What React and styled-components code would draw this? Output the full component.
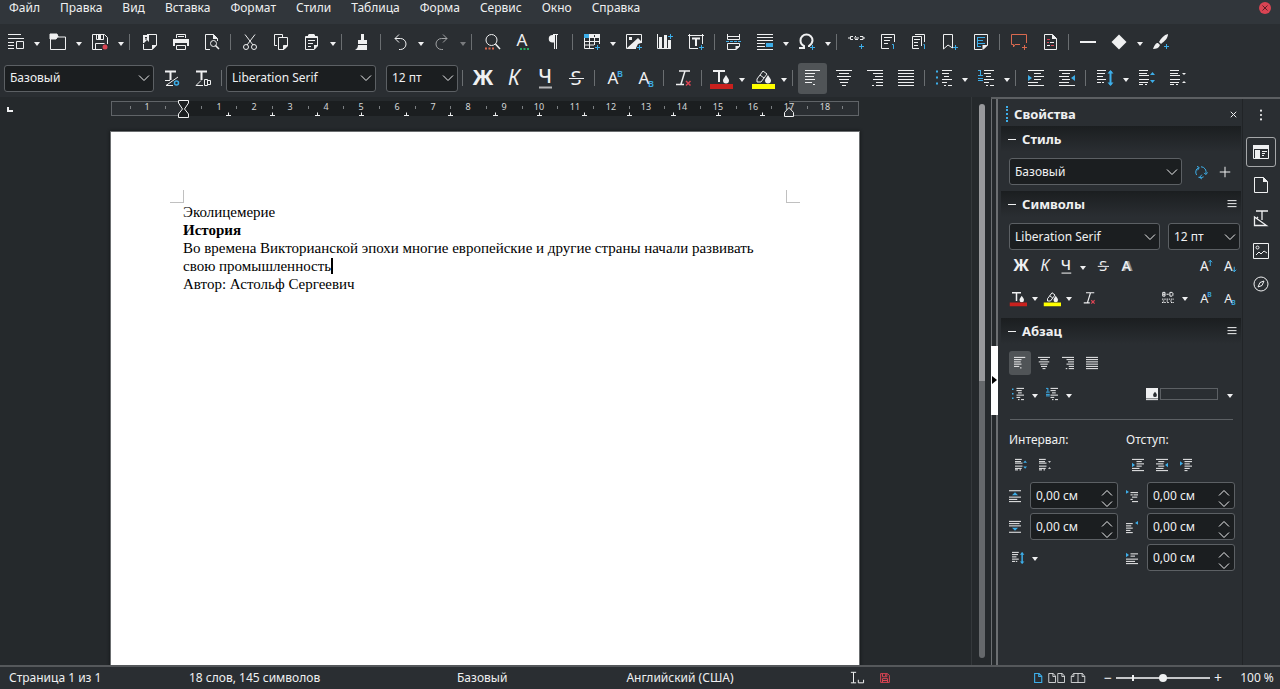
import styled, { createGlobalStyle, css } from 'styled-components';

const GlobalStyle = createGlobalStyle`
  :root {
    --window: #2a2e32;
    --header: #31363b;
    --view: #1b1e20;
    --canvas: #25292c;
    --line: #5c6064;
    --text: #eff0f1;
    --blue: #3daee9;
    --red: #da4453;
    --orange: #d9694f;
    --green: #27ae60;
  }

  * {
    box-sizing: border-box;
  }

  body {
    margin: 0;
    background: var(--window);
    color: var(--text);
    font: 12px/18px 'Noto Sans', sans-serif;
    overflow: hidden;
  }

  button,
  input,
  select {
    font: inherit;
    color: inherit;
  }

  button {
    border: 0;
    padding: 0;
    background: none;
  }
`;

/* ---------- icons ---------- */

const rows = (list) => list.map(([x, y, w]) => `M${x} ${y}h${w}`).join('');

const leftRows = rows([[0, 0.5, 15], [0, 3.5, 10], [0, 6.5, 9], [0, 9.5, 10], [0, 12.5, 7], [8, 14.5, 2]]);
const centerRows = rows([[0, 0.5, 16], [3, 3.5, 10], [1, 6.5, 14], [3, 9.5, 10], [4, 12.5, 8], [6, 15.5, 4]]);
const rightRows = rows([[0, 0.5, 16], [6, 3.5, 10], [8, 6.5, 8], [6, 9.5, 10], [9, 12.5, 7], [5, 15.5, 2], [9, 15.5, 7]]);
const fullRows = rows([[0, 0.5, 16], [0, 3.5, 16], [0, 6.5, 16], [0, 9.5, 16], [0, 12.5, 16], [0, 15.5, 16]]);
const listRows = rows([[6, 0.5, 10], [6, 3.5, 7], [8, 6.5, 5], [6, 9.5, 10], [6, 12.5, 5], [8, 15.5, 2], [12, 15.5, 4]]);
const paraRows = rows([[0, 0.5, 9], [0, 3.5, 8], [0, 5.5, 10], [0, 9.5, 10], [0, 12.5, 9], [0, 14.5, 4], [6, 14.5, 2]]);

const Plus = ({ x = 13.5, y = 13.5, color = 'var(--blue)' }) => (
  <path d={`M${x - 2.5} ${y}h5M${x} ${y - 2.5}v5`} stroke={color} />
);

const Glyph = ({ x = 8, y = 15, size = 20, weight = 400, color = 'currentColor', children, ...rest }) => (
  <text
    x={x}
    y={y}
    fontSize={size}
    fontWeight={weight}
    fill={color}
    stroke='none'
    textAnchor='middle'
    {...rest}
  >
    {children}
  </text>
);

const drop = 'M13 5c1.5 2.5 3 4 3 5.5a3 3 0 0 1-6 0C10 9 11.5 7.5 13 5z';

const icons = {
  template: (
    <>
      <path d={rows([[0, 0.5, 13], [0, 4.5, 16], [0, 8.5, 6], [0, 11.5, 6], [0, 14.5, 6]])} />
      <path d='M8.5 7.5h7v7h-7z' />
    </>
  ),
  open: (
    <>
      <path d='M.5.5h6L8 3h7.5v12.5H.5z' />
      <path d='M0 0h7l1 2.5L6 5H0z' fill='currentColor' />
    </>
  ),
  save: (
    <>
      <path d='M10 15.5H.5V.5h12l3 3V10M4.5.5v5h7v-5M3.5 15V9.500h9' />
      <path d='M6 1h3v4H6z' fill='currentColor' stroke='none' />
      <circle cx='13' cy='13' r='2.5' fill='var(--red)' stroke='none' />
    </>
  ),
  exportPdf: (
    <>
      <path d='M5 .5h9.5V11L10 15.5H1.5V10' />
      <path d='M1 1h6v7L5 6l-3 3H1zM10 11h5l-5 5z' fill='currentColor' stroke='none' />
      <path d='M3 3.5h2M4 3v3' stroke='var(--window)' />
    </>
  ),
  print: (
    <>
      <path d='M3.5 4V.5h9V4M3.5 11.5v4h9v-4z' />
      <path d='M0 5h16v7h-2V9H2v3H0z' fill='currentColor' stroke='none' />
      <path d='M5 2.5h6' />
    </>
  ),
  preview: (
    <>
      <path d='M6 15.5H1.5V.5h8l4 4V7' />
      <path d='M9 0v5h5z' fill='currentColor' stroke='none' />
      <circle cx='9.5' cy='9.5' r='3' />
      <path d='M11.5 11.5 15 15' strokeWidth='1.5' />
    </>
  ),
  cut: (
    <>
      <path d='m3 .5 8 10.5M13 .5 5 11' />
      <circle cx='4' cy='13' r='2.5' />
      <circle cx='12' cy='13' r='2.5' />
    </>
  ),
  copy: (
    <>
      <path d='M4 11.5H1.5V.5h8V3M5.5 3.5h9V12L11 15.5H5.5z' />
      <path d='M10.5 11.5h4l-4 4z' fill='currentColor' />
    </>
  ),
  paste: (
    <>
      <path d='M10 15.5H1.5v-13h12V12L10 15.5M4.5.5h6' />
      <path d='M4 1h7v3H4zM10 11h4l-4 5z' fill='currentColor' stroke='none' />
      <path d='M2 3.5h11M4 6.5h7M4 9.500h5M4 12.5h3' />
    </>
  ),
  brush: <path d='M7 0h3v6H7zM4 6h9v4H4zM4 11h9v5H1c2-1 3-3 3-5z' fill='currentColor' stroke='none' />,
  undo: <path d='M7 .5 3 4.5l4 4M3 4.5h5.5a5 5 0 0 1 0 11H7' />,
  redo: <path d='m9 .5 4 4-4 4M13 4.5H7.500a5 5 0 0 0 0 11H9' />,
  find: (
    <>
      <circle cx='7.5' cy='6' r='5.5' />
      <path d='m11.5 10 4.500 5' strokeWidth='1.5' />
      <path d='M1 14.5h10' stroke='var(--orange)' strokeWidth='2' strokeDasharray='2 1.5' />
    </>
  ),
  spell: (
    <>
      <Glyph x={7} y={12} size={17}>A</Glyph>
      <path d='M5 15h10' stroke='var(--green)' strokeWidth='2' strokeDasharray='2 1.5' />
    </>
  ),
  pilcrow: (
    <>
      <path d='M8 1H6.5a3.5 3.5 0 0 0 0 7.500H8z' fill='currentColor' stroke='none' />
      <path d='M7 .5h5M8.5 0v15M10.5 0v15' />
    </>
  ),
  table: (
    <>
      <path d='M0 0h5v4H0z' fill='var(--blue)' stroke='none' />
      <path d='M5 0h11v4H5z' fill='currentColor' stroke='none' />
      <path d='M10.5 1v2' stroke='var(--window)' />
      <path d='M15.5 4v6M.5 4v10.5H10M0 7.500h16M0 11h10M5.5 4v11M10.5 4v7' />
      <Plus />
    </>
  ),
  image: (
    <>
      <path d='M15.5 9V.5H.5v14H10' />
      <path d='M1 14 12 4l3 3v2l-3 1-2 4zM3 3h3v3H3z' fill='currentColor' stroke='none' />
      <Plus />
    </>
  ),
  chart: (
    <>
      <path d='M.5 0v14.5H14' />
      <path d='M2 3h3v11H2zM7 1h3v13H7zM11 6h3v8h-3z' fill='currentColor' stroke='none' />
      <Plus x={13.5} y={2.5} />
    </>
  ),
  textBox: (
    <>
      <path d='M1.5 0v14.5H10M14.5 0v10M0 1.5h16' />
      <path d='M4 4.5h8M8 4.5V12' strokeWidth='2' />
      <Plus />
    </>
  ),
  pageBreak: (
    <>
      <path d='M1.5 0v5.5h12V0M1.5 2.5h12M10 15.5H1.5v-6h12v3z' />
      <path d='M0 7.500h15' stroke='var(--blue)' strokeDasharray='3 1' />
      <path d='M9.500 12H14l-4.5 4z' fill='currentColor' stroke='none' />
    </>
  ),
  field: (
    <>
      <path d={rows([[0, 0.5, 16], [0, 3.5, 16], [0, 6.5, 16], [0, 9.5, 8], [0, 12.5, 8], [0, 15.5, 16]])} />
      <path d='M9 9h7v4H9z' fill='var(--blue)' stroke='none' />
    </>
  ),
  omega: (
    <>
      <path
        d='M0 14h5v-2C2 10.5 1.5 8.5 1.5 6.5a6 6 0 0 1 12 0c0 2-1 3.500-3.500 5.500v1'
        strokeWidth='2'
      />
      <Plus />
    </>
  ),
  link: (
    <>
      <path d='M4 2.5H1.5v3H4M5 4h5M7 2.5H6M11 2.5h3v3h-3M6 5.5h3M14 4h2M-1 4h2' />
      <Plus x={12.5} y={12.5} />
    </>
  ),
  footnote: (
    <>
      <path d='M9 14.5H1.5V.5h13V8M4 3.5h8M4 6.5h6M4 9.500h4' />
      <path d='M12 10.5h1.5V15' stroke='var(--blue)' />
    </>
  ),
  endnote: (
    <>
      <path d='M8 14.5H1.5v-12h9V12M4 .5h9.500V8M3 5.5h6M3 8.5h4M3 11.5h4' />
      <path d='M12.5 10.5h1V15' stroke='var(--blue)' />
    </>
  ),
  bookmark: (
    <>
      <path d='M1.5.5h9V14L6 11l-4.500 4z' />
      <Plus />
    </>
  ),
  crossRef: (
    <>
      <path d='M9 15.5H1.5V.5h13V11L10 15.5' />
      <path d='M5 3.5h7M5 6.5h5M5 9.500h7M5 12.5h3M4.5 3v10' stroke='var(--blue)' />
      <path d='M9.500 11H15l-5.500 5z' fill='currentColor' stroke='none' />
    </>
  ),
  comment: (
    <>
      <path d='M9 10.5H4L2.5 13v-2.500H.5V.5h15V9' stroke='var(--orange)' />
      <Plus color='var(--orange)' />
    </>
  ),
  changes: (
    <>
      <path d='M2.5.5h8l4 4v11h-12z' />
      <path d='M10 0v5h5z' fill='currentColor' stroke='none' />
      <path d='M5 5.5h3M5 8.5h2M9 11.5h3' stroke='var(--red)' />
      <path d='M8 8.5h4M5 11.5h3' />
    </>
  ),
  rule: <path d='M0 8h16' strokeWidth='2' />,
  diamond: <path d='m8 .5 7.500 7.500L8 15.5.5 8z' fill='currentColor' stroke='none' />,
  draw: (
    <>
      <path d='M15 0c-4 1-7 4-9 8l2 2c4-3 7-6 7-10zM5 9c-2 0-3 1-5 6 3 0 6-1 7-4z' fill='currentColor' stroke='none' />
      <Plus x={13.5} y={12.5} />
    </>
  ),
  updateStyle: (
    <>
      <path d='M1 1.5h11M6.5 1v9' strokeWidth='2' />
      <path d='M1 10.5h5M14 7 2 15.5h7' />
      <circle cx='12.5' cy='13' r='2' stroke='var(--blue)' strokeWidth='1.5' />
    </>
  ),
  newStyle: (
    <>
      <path d='M1 1.5h11M6.5 1v9' strokeWidth='2' />
      <path d='M6 10.5 1 15.5h7M9.500 9.500h3v6h-3zM12.5 10.5h3v4h-3' />
    </>
  ),
  bold: <Glyph size={21} weight={700}>Ж</Glyph>,
  italic: <Glyph size={21} weight={400} fontStyle='italic'>К</Glyph>,
  underline: (
    <>
      <Glyph y={13} size={20} weight={500}>Ч</Glyph>
      <path d='M2 17.5h13' strokeWidth='2' opacity='.7' />
    </>
  ),
  strike: (
    <>
      <Glyph y={15} size={20}>S</Glyph>
      <path d='M1 8.5h15' stroke='var(--window)' strokeWidth='3' />
      <path d='M1 8.5h15' />
    </>
  ),
  shadow: (
    <>
      <Glyph x={9} y={15} size={19} weight={700} color='#8a8e91'>A</Glyph>
      <Glyph x={7} y={14} size={19} weight={500}>A</Glyph>
    </>
  ),
  superscript: (
    <>
      <Glyph x={7} y={14} size={17}>A</Glyph>
      <Glyph x={14} y={7} size={9} weight={600} color='var(--blue)'>B</Glyph>
    </>
  ),
  subscript: (
    <>
      <Glyph x={7} y={14} size={17}>A</Glyph>
      <Glyph x={14} y={17} size={9} weight={600} color='var(--blue)'>B</Glyph>
    </>
  ),
  grow: (
    <>
      <Glyph x={7} y={14} size={18}>A</Glyph>
      <path d='M15 8V0M12.5 3 15 .5 17.5 3' stroke='var(--blue)' />
    </>
  ),
  shrink: (
    <>
      <Glyph x={7} y={14} size={18}>A</Glyph>
      <path d='M15 9v7M12.5 13l2.500 2.500 2.500-2.500' stroke='var(--blue)' />
    </>
  ),
  clear: (
    <>
      <path d='M4 1h11M10 1 6 14M1 14.5h8' strokeWidth='1.5' />
      <path d='m11 11 4.500 4.500m0-4.500L11 15.5' stroke='var(--red)' strokeWidth='1.5' />
    </>
  ),
  fontColor: (
    <>
      <path d='M0 1h12M6 1v11' strokeWidth='2' />
      <path d={drop} fill='currentColor' stroke='none' />
      <path d='M-3 16.5h23' stroke='#c9211e' strokeWidth='5' />
    </>
  ),
  highlight: (
    <>
      <path d='m2 9 6-8 4 3-6 8H2zM5 5l4 3' />
      <path d={drop} fill='currentColor' stroke='none' />
      <path d='M-3 16.5h23' stroke='#ffff00' strokeWidth='5' />
    </>
  ),
  spacing: (
    <>
      <path d='M1 .5h3v5H1zM1 3h3M10.5.5h3l1 1v3l-1 1h-3zM6 3h3' />
      <path d='M0 9.500h16M0 14h5m2 0h3m2 0h4M1 12h2m3 0h2m3 0h3' strokeDasharray='2 1' />
    </>
  ),
  alignLeft: <path d={leftRows} />,
  alignCenter: <path d={centerRows} />,
  alignRight: <path d={rightRows} />,
  alignFull: <path d={fullRows} />,
  bullets: (
    <>
      <path d={listRows} />
      <path d='M0 1.5h2M0 7.500h2M0 13.5h2' stroke='var(--blue)' strokeWidth='2' />
    </>
  ),
  numbering: (
    <>
      <path d={listRows} />
      <path d='M0 5.5h5M2.5 0v5M0 .5h2.5M0 8.5h5M0 10.5h5' stroke='var(--blue)' />
    </>
  ),
  indentMore: (
    <>
      <path d={rows([[0, 0.5, 16], [6, 3.5, 7], [6, 6.5, 10], [6, 9.5, 7], [0, 12.5, 10], [0, 15.5, 16]])} />
      <path d='M0 5v6l4-3z' fill='var(--blue)' stroke='none' />
    </>
  ),
  indentLess: (
    <>
      <path d={rows([[0, 0.5, 16], [3, 3.5, 8], [0, 6.5, 10], [3, 9.5, 8], [0, 12.5, 10], [0, 15.5, 16]])} />
      <path d='M16 5v6l-4-3z' fill='var(--blue)' stroke='none' />
    </>
  ),
  hanging: (
    <>
      <path d={rows([[4, 0.5, 12], [6, 3.5, 10], [6, 6.5, 7], [6, 9.5, 10], [6, 12.5, 7], [6, 15.5, 4]])} />
      <path d='M0 3v6l4-3z' fill='var(--blue)' stroke='none' />
    </>
  ),
  lineSpacing: (
    <>
      <path d={rows([[0, 0.5, 9], [0, 3.5, 8], [0, 6.5, 6], [0, 9.5, 9], [0, 12.5, 4], [5, 12.5, 2]])} />
      <path d='M13.5 1v14' stroke='var(--blue)' strokeWidth='2' />
      <path d='m10.5 3.5 3-3.500 3 3.500zM10.5 12.5l3 3.500 3-3.500z' fill='var(--blue)' stroke='none' />
    </>
  ),
  paraMore: (
    <>
      <path d={paraRows} />
      <path d='m11 5 2.500-3L16 5zM11 10l2.500 3 2.500-3z' fill='var(--blue)' stroke='none' />
    </>
  ),
  paraLess: (
    <>
      <path d={paraRows} />
      <path d='m12 3 2 2 2-2zM12 13l2-2 2 2z' fill='currentColor' stroke='none' />
    </>
  ),
  above: (
    <>
      <path d='M0 1h16M0 9.500h16M0 12.5h11M0 15.5h16' />
      <path d='m4 7 4-4 4 4z' fill='var(--blue)' stroke='none' />
    </>
  ),
  below: (
    <>
      <path d='M0 .5h16M0 3.5h14M0 6.5h16M0 15h16' />
      <path d='m4 9 4 4 4-4z' fill='var(--blue)' stroke='none' />
    </>
  ),
  before: (
    <>
      <path d={rows([[6, 3.5, 10], [6, 6.5, 3], [10, 6.5, 6], [8, 9.5, 7], [6, 12.5, 3], [8, 15.5, 8]])} />
      <path d='M0 0v5l4-2.500z' fill='var(--blue)' stroke='none' />
    </>
  ),
  after: (
    <>
      <path d={rows([[0, 3.5, 9], [0, 6.5, 7], [0, 9.5, 9], [0, 12.5, 6], [0, 15.5, 9]])} />
      <path d='M16 0v5l-4-2.500z' fill='var(--blue)' stroke='none' />
    </>
  ),
  firstLine: (
    <>
      <path d={rows([[6, 2.5, 10], [6, 5.5, 6], [0, 9.5, 16], [0, 12.5, 12], [0, 15.5, 16]])} />
      <path d='M0 1v6l4-3z' fill='var(--blue)' stroke='none' />
    </>
  ),
  background: (
    <>
      <path d='M0 0h16v14H0z' fill='currentColor' stroke='none' />
      <path d='M0 15.5h16' />
      <path d='M12 5c1.5 2 2.5 3 2.5 4.500a2.500 2.500 0 0 1-5 0C9.500 8 10.5 7 12 5z' fill='var(--window)' stroke='none' />
    </>
  ),
  refresh: (
    <>
      <path d='M3 11.5A6 6 0 0 1 5 3M8 2a6 6 0 0 1 5.500 8M5 14a6 6 0 0 0 6-.5' stroke='var(--blue)' />
      <path d='M3.5 1.5 6 3 4 6M11.5 9l2 2 2-2.500M9 11l-2.500 3L9 16' stroke='var(--blue)' />
    </>
  ),
  plus: <path d='M2 8h12M8 2v12' />,
  menu: <path d='M2 3.5h12M2 7.500h12M2 11.5h12' />,
  dots: (
    <g fill='currentColor' stroke='none'>
      <circle cx='8' cy='3' r='1.2' />
      <circle cx='8' cy='8' r='1.2' />
      <circle cx='8' cy='13' r='1.2' />
    </g>
  ),
  close: <path d='m4 4 8 8m0-8-8 8' />,
  chevron: <path d='m3 5.5 5 5 5-5' />,
  chevronUp: <path d='m3 10.5 5-5 5 5' />,
  properties: (
    <>
      <path d='M.5 1.5h15v13H.5zM9 7.500h5M9 9.500h3M9 11.5h2' />
      <path d='M0 1h16v4H0zM2 6h5v8H2z' fill='currentColor' stroke='none' />
    </>
  ),
  page: (
    <>
      <path d='M1.5.5h9l4 4v11h-13z' />
      <path d='M10 0v5h5z' fill='currentColor' stroke='none' />
    </>
  ),
  styles: <path d='M3 1h12M9 1v9M1.5 15.5V7l12 8.500zM4 7l1 1' strokeWidth='1.3' />,
  gallery: (
    <>
      <path d='M.5.5h15v15H.5z' />
      <circle cx='4.5' cy='4.5' r='1.5' />
      <path d='m3 12 3-3 2 2 3-3 3 2' />
    </>
  ),
  navigator: (
    <>
      <circle cx='8' cy='8' r='7' />
      <path d='M11 5 9 9.500 5 11l2-4.500z' />
    </>
  ),
  insertMode: <path d='M1 1.5h6M4 1.5v12M1 13.5h6M9.500 10v3.500h6V10' />,
  modified: (
    <path d='M1 1h11l3 3v11H1zM4 1v5h7V1M4 15V9h8v6M4 12h8M9 2v3' stroke='var(--red)' />
  ),
  viewSingle: <path d='M3.5 2h6L13 5.5V14H3.500zM9 2v4h4' stroke='var(--blue)' strokeWidth='1.5' />,
  viewMulti: <path d='M1 2h6l3 3.500V14H1zM6.5 2v4H10M13 2h6l3 3.500V14h-9zM18.5 2v4H22' opacity='.8' />,
  viewBook: <path d='M1 14V6l3-4h6v12zM10 2h6l3 4v8h-9M4.5 2v4H1M15.5 2v4H19' opacity='.8' />,
};

const Svg = styled.svg`
  display: block;
  flex: none;
  overflow: visible;
  fill: none;
  stroke: currentColor;
`;

/* strokes stay one pixel wide at every size */
const Icon = ({ name, size = 16, width = size, box = 16 }) => (
  <Svg
    width={width}
    height={size}
    viewBox={`0 0 ${box} 16`}
    strokeWidth={16 / size}
    aria-hidden='true'
  >
    {icons[name]}
  </Svg>
);

/* ---------- menu and toolbars ---------- */

const Shell = styled.div`
  height: 100vh;
  display: flex;
  flex-direction: column;
`;

const MenuBar = styled.nav`
  height: 24px;
  flex: none;
  display: flex;
  align-items: flex-start;
  gap: 20px;
  padding: 0 9px;
  background: var(--header);
  line-height: 16px;
`;

const CloseWindow = styled.button`
  width: 12px;
  height: 12px;
  margin: 2px 0 0 auto;
  display: grid;
  place-items: center;
  border-radius: 50%;
  background: var(--red);
  color: #5c1d26;
`;

const Toolbar = styled.div`
  height: 36px;
  flex: none;
  display: flex;
  align-items: center;

  ${({ $format }) =>
    $format &&
    css`
      height: 37px;
      padding: 0 0 1px 4px;
    `}
`;

const ToolButton = styled.button`
  width: 29px;
  height: 31px;
  flex: none;
  margin: 0 1px;
  padding-left: 7px;
  display: flex;
  align-items: center;
  border-radius: 3px;
  background: ${({ $active }) => ($active ? '#505457' : 'none')};
  opacity: ${({ disabled }) => (disabled ? 0.6 : 1)};
`;

const CaretButton = styled.button`
  width: ${({ $small }) => ($small ? 16 : 11)}px;
  height: 20px;
  flex: none;
  display: grid;
  place-items: center;
  opacity: ${({ disabled }) => (disabled ? 0.4 : 1)};

  &::before {
    content: '';
    margin-top: 3px;
    border: 3px solid transparent;
    border-top: 4px solid var(--text);
    border-bottom: 0;
  }
`;

const Separator = styled.span`
  width: 1px;
  height: 16px;
  flex: none;
  margin: 0 ${({ $wide }) => ($wide ? 4 : 3)}px 0 3px;
  background: #6a6e71;
`;

const SelectBox = styled.span`
  width: ${({ $width }) => $width}px;
  height: 27px;
  flex: none;
  display: grid;
  align-items: center;
  margin-right: ${({ $gap }) => $gap || 0}px;

  select,
  svg {
    grid-area: 1 / 1;
  }

  select {
    width: 100%;
    height: 100%;
    padding: 0 24px 0 5px;
    appearance: none;
    border: 1px solid var(--line);
    border-radius: 3px;
    background: var(--view);
  }

  svg {
    justify-self: end;
    margin-right: 2px;
    pointer-events: none;
  }
`;

const Select = ({ label, value, ...rest }) => (
  <SelectBox {...rest}>
    <select aria-label={label} defaultValue={value}>
      <option>{value}</option>
    </select>
    <Icon name='chevron' />
  </SelectBox>
);

const Tools = ({ items }) =>
  items.map((item, i) => {
    if (item === '|') return <Separator key={i} $wide={items[i - 1][2]} />;
    const [name, label, caret, state] = item;
    const disabled = state === 'disabled';
    return [
      <ToolButton
        key={name}
        aria-label={label}
        title={label}
        disabled={disabled}
        $active={state === 'active'}
      >
        <Icon name={name} />
      </ToolButton>,
      caret && (
        <CaretButton key={`${name}-more`} aria-label={`${label}: ещё`} disabled={disabled} />
      ),
    ];
  });

const menus = [
  'Файл', 'Правка', 'Вид', 'Вставка', 'Формат', 'Стили',
  'Таблица', 'Форма', 'Сервис', 'Окно', 'Справка',
];

const standardTools = [
  ['template', 'Шаблоны', true],
  ['open', 'Открыть', true],
  ['save', 'Сохранить', true],
  '|',
  ['exportPdf', 'Экспорт в PDF'],
  ['print', 'Печать'],
  ['preview', 'Предпросмотр'],
  '|',
  ['cut', 'Вырезать'],
  ['copy', 'Копировать'],
  ['paste', 'Вставить', true],
  '|',
  ['brush', 'Копировать форматирование'],
  '|',
  ['undo', 'Отменить', true],
  ['redo', 'Вернуть', true, 'disabled'],
  '|',
  ['find', 'Найти и заменить'],
  ['spell', 'Орфография'],
  ['pilcrow', 'Непечатаемые символы'],
  '|',
  ['table', 'Таблица', true],
  ['image', 'Изображение'],
  ['chart', 'Диаграмма'],
  ['textBox', 'Текстовое поле'],
  '|',
  ['pageBreak', 'Разрыв страницы'],
  ['field', 'Поле', true],
  ['omega', 'Специальный символ', true],
  '|',
  ['link', 'Гиперссылка'],
  ['footnote', 'Сноска'],
  ['endnote', 'Концевая сноска'],
  ['bookmark', 'Закладка'],
  ['crossRef', 'Перекрёстная ссылка'],
  '|',
  ['comment', 'Комментарий'],
  ['changes', 'Запись изменений'],
  '|',
  ['rule', 'Линия'],
  ['diamond', 'Фигуры', true],
  ['draw', 'Функции рисования'],
];

const styleTools = [
  ['updateStyle', 'Обновить стиль'],
  ['newStyle', 'Создать стиль'],
];

const formatTools = [
  ['bold', 'Полужирный'],
  ['italic', 'Курсив'],
  ['underline', 'Подчёркнутый'],
  ['strike', 'Зачёркнутый'],
  '|',
  ['superscript', 'Верхний индекс'],
  ['subscript', 'Нижний индекс'],
  '|',
  ['clear', 'Очистить форматирование'],
  '|',
  ['fontColor', 'Цвет шрифта', true],
  ['highlight', 'Цвет выделения', true],
  '|',
  ['alignLeft', 'По левому краю', false, 'active'],
  ['alignCenter', 'По центру'],
  ['alignRight', 'По правому краю'],
  ['alignFull', 'По ширине'],
  '|',
  ['bullets', 'Маркированный список', true],
  ['numbering', 'Нумерованный список', true],
  '|',
  ['indentMore', 'Увеличить отступ'],
  ['indentLess', 'Уменьшить отступ'],
  '|',
  ['lineSpacing', 'Межстрочный интервал', true],
  ['paraMore', 'Увеличить интервал'],
  ['paraLess', 'Уменьшить интервал'],
];

/* ---------- document ---------- */

const Workspace = styled.div`
  flex: 1;
  min-height: 0;
  display: flex;
`;

const Canvas = styled.main`
  flex: 1;
  min-width: 0;
  padding: 4px 1px 0 0;
  overflow: hidden;
  background: var(--canvas);
`;

const RulerRow = styled.div`
  display: grid;
  grid-template-columns: 1fr 748px 1fr;
  align-items: center;
`;

const TabKind = styled.button`
  width: 6px;
  height: 5px;
  margin-left: 7px;
  border-left: 2px solid var(--text);
  border-bottom: 2px solid var(--text);
`;

const RulerSvg = styled.svg`
  display: block;
  overflow: visible;
  font-size: 9px;
`;

const CM = 606 / 17;

const Ruler = () => {
  const marks = Array.from({ length: 20 }, (_, i) => i - 1).filter((n) => n !== 0);
  const halves = Array.from({ length: 21 }, (_, i) => i - 1.5);
  const tabs = Array.from({ length: 13 }, (_, i) => (i + 1) * 1.25);

  return (
    <RulerSvg width='748' height='17' viewBox='0 0 748 17' fill='none'>
      <rect x='.5' y='.5' width='747' height='14' fill='#2a2e32' stroke='#606468' />
      <rect x='72' width='606' height='15' fill='#1b1e20' />
      {halves.map((n) => (
        <path key={n} d={`M${Math.round(72 + n * CM)}.5 5v3`} stroke='#7c8083' />
      ))}
      {marks.map((n) => (
        <text key={n} x={Math.round(72 + n * CM)} y='9' fill='#d5d7d8' textAnchor='middle'>
          {Math.abs(n)}
        </text>
      ))}
      {tabs.map((n) => (
        <path key={n} d={`M${Math.round(72 + n * CM) - 2} 14.5h5m-2.500 0v-3`} stroke='#eff0f1' />
      ))}
      <path
        d='M67.5-.5h10V2l-4 6 4 5v3.500h-10V13l4-5-4-6z'
        fill='#1b1e20'
        stroke='#eff0f1'
      />
      <path d='M673.5 15.5v-4l4.500-5 4.500 5v4z' fill='#2a2e32' stroke='#eff0f1' />
    </RulerSvg>
  );
};

const Page = styled.article`
  width: 750px;
  height: 1058px;
  margin: 13px auto 0;
  padding: 58px 59px 0;
  border: 1px solid #6b6e70;
  box-shadow: 0 0 3px #101213;
  background: #fff;
  color: #000;
  font: 15px/18px 'Liberation Serif', serif;
`;

const Margins = styled.div`
  display: flex;
  justify-content: space-between;

  &::before,
  &::after {
    content: '';
    width: 13px;
    height: 12px;
    border: 0 solid #c0c0c0;
    border-bottom-width: 1px;
  }

  &::before {
    border-right-width: 1px;
  }

  &::after {
    border-left-width: 1px;
  }
`;

const Line = styled.p`
  margin: 0 12px 0 13px;
  font-weight: ${({ $bold }) => ($bold ? 700 : 400)};
`;

const TextCursor = styled.span`
  display: inline-block;
  width: 2px;
  height: 16px;
  margin-right: -2px;
  vertical-align: -3px;
  background: #000;
`;

const ScrollTrack = styled.div`
  width: 20px;
  flex: none;
  padding: 7px 6px 7px 7px;
  border-left: 1px solid #34383b;
  background: var(--canvas);

  &::before {
    content: '';
    display: block;
    height: 100%;
    border-radius: 3px;
    background: linear-gradient(#98999c 0 50%, #65686b 50%);
  }
`;

/* ---------- sidebar ---------- */

const Splitter = styled.div`
  width: 10px;
  flex: none;
  display: flex;
  align-items: center;
  padding-bottom: 4px;
  border-top: 2px solid #5c5f62;
  background: linear-gradient(90deg, #6c6f72 1px, #25292c 1px 5px, #6c6f72 5px 7px, #2a2e32 7px);
`;

const SplitterGrip = styled.button`
  width: 7px;
  height: 69px;
  background: #fff;

  &::before {
    content: '';
    display: block;
    margin-left: 1px;
    border: 4px solid transparent;
    border-left: 5px solid #000;
    border-right: 0;
  }
`;

const Sidebar = styled.aside`
  width: 279px;
  flex: none;
  display: flex;
  border-top: 2px solid #5c5f62;
`;

const Panel = styled.div`
  width: 242px;
  padding: 4px 1px 0 0;
  border-right: 1px solid #212427;
`;

const PanelTitle = styled.header`
  height: 23px;
  display: flex;
  align-items: center;
  justify-content: space-between;
  padding: 0 2px 1px 5px;

  h2 {
    margin: 0;
    padding-left: 6px;
    border-left: 2px dotted var(--blue);
    font-size: 13px;
    line-height: 16px;
  }
`;

const SectionHeader = styled.header`
  height: 26px;
  display: flex;
  align-items: center;
  gap: 6px;
  padding: 0 3px 0 7px;
  background: linear-gradient(#1b1e20, #2a2e32);

  &::before {
    content: '';
    width: 8px;
    height: 1px;
    background: var(--text);
  }

  h3 {
    flex: 1;
    margin: 0;
    font-size: 13px;
  }
`;

const SectionBody = styled.div`
  padding: 6px 0 ${({ $bottom }) => $bottom || 6}px 8px;
`;

const Row = styled.div`
  height: ${({ $height }) => $height || 31}px;
  display: flex;
  align-items: center;
  padding-right: ${({ $end }) => $end || 0}px;
`;

const Push = styled.span`
  flex: 1;
`;

const SmallButton = styled.button`
  width: ${({ $narrow }) => ($narrow ? 18 : 24)}px;
  height: 24px;
  flex: none;
  display: grid;
  place-items: center;

  ${({ $active }) =>
    $active &&
    css`
      width: 22px;
      margin-right: 1px;
      border-radius: 3px;
      background: #505457;
    `}
`;

const Small = ({ name, label, caret, active, size = 12 }) => (
  <>
    <SmallButton aria-label={label} title={label} $narrow={caret} $active={active}>
      <Icon name={name} size={size} />
    </SmallButton>
    {caret && <CaretButton $small aria-label={`${label}: ещё`} />}
  </>
);

const Swatch = styled.button`
  width: 58px;
  height: 12px;
  margin: 0 4px 0 2px;
  border: 1px solid var(--line);
`;

const Divider = styled.hr`
  height: 1px;
  margin: 7px 8px 11px 1px;
  border: 0;
  background: var(--line);
`;

const Columns = styled.div`
  display: grid;
  grid-template-columns: 117px 117px;
`;

const Field = styled.label`
  height: 31px;
  display: flex;
  align-items: center;
  gap: 9px;
`;

const Spin = styled.span`
  width: 88px;
  height: 27px;
  display: flex;
  border: 1px solid var(--line);
  border-radius: 3px;
  background: var(--view);

  input {
    width: 68px;
    padding: 0 0 0 5px;
    border: 0;
    background: none;
  }

  span {
    display: grid;
    align-content: center;
  }

  button {
    height: 11px;
    display: grid;
    align-items: center;
  }
`;

const SpinField = ({ icon, label }) => (
  <Field>
    <Icon name={icon} size={12} />
    <Spin>
      <input aria-label={label} defaultValue='0,00 см' />
      <span>
        <button aria-label={`${label}: больше`}>
          <Icon name='chevronUp' />
        </button>
        <button aria-label={`${label}: меньше`}>
          <Icon name='chevron' />
        </button>
      </span>
    </Spin>
  </Field>
);

const Section = ({ title, menu, bottom, children }) => (
  <section>
    <SectionHeader>
      <h3>{title}</h3>
      {menu && (
        <button aria-label={`${title}: параметры`}>
          <Icon name='menu' size={12} />
        </button>
      )}
    </SectionHeader>
    <SectionBody $bottom={bottom}>{children}</SectionBody>
  </section>
);

const TabBar = styled.nav`
  flex: 1;
  display: flex;
  flex-direction: column;
  align-items: center;
  gap: 3px;
  padding: 4px 1px 0 0;
`;

const DeckButton = styled.button`
  width: 30px;
  height: 30px;
  display: grid;
  place-items: center;
  border: 1px solid ${({ $active }) => ($active ? '#a5a7a9' : 'transparent')};
  border-radius: 3px;
`;

const DeckMenu = styled(DeckButton)`
  height: 24px;
  margin-bottom: 7px;
`;

const PropertiesPanel = () => (
  <Panel>
    <PanelTitle>
      <h2>Свойства</h2>
      <button aria-label='Закрыть панель'>
        <Icon name='close' size={11} />
      </button>
    </PanelTitle>
    <Section title='Стиль'>
      <Row $height={27}>
        <Select label='Стиль абзаца' value='Базовый' $width={173} $gap={7} />
        <Small name='refresh' label='Обновить стиль' size={14} />
        <Small name='plus' label='Создать стиль' size={14} />
      </Row>
    </Section>
    <Section title='Символы' menu bottom={5}>
      <Row $height={27}>
        <Select label='Гарнитура' value='Liberation Serif' $width={151} $gap={8} />
        <Select label='Кегль' value='12 пт' $width={72} />
      </Row>
      <Row $height={32}>
        <Small name='bold' label='Полужирный' />
        <Small name='italic' label='Курсив' />
        <Small name='underline' label='Подчёркнутый' caret />
        <Small name='strike' label='Зачёркнутый' />
        <Small name='shadow' label='Тень' />
        <Push />
        <Small name='grow' label='Увеличить кегль' />
        <Small name='shrink' label='Уменьшить кегль' />
      </Row>
      <Row>
        <Small name='fontColor' label='Цвет шрифта' caret />
        <Small name='highlight' label='Цвет выделения' caret />
        <Small name='clear' label='Очистить' />
        <Push />
        <Small name='spacing' label='Межсимвольный интервал' caret />
        <Small name='superscript' label='Верхний индекс' />
        <Small name='subscript' label='Нижний индекс' />
      </Row>
    </Section>
    <Section title='Абзац' menu>
      <Row $height={26}>
        <Small name='alignLeft' label='По левому краю' active />
        <Small name='alignCenter' label='По центру' />
        <Small name='alignRight' label='По правому краю' />
        <Small name='alignFull' label='По ширине' />
      </Row>
      <Row $height={36} $end={3}>
        <Small name='bullets' label='Маркированный список' caret />
        <Small name='numbering' label='Нумерованный список' caret />
        <Push />
        <Icon name='background' size={12} />
        <Swatch aria-label='Цвет фона' />
        <CaretButton $small aria-label='Цвет фона: ещё' />
      </Row>
      <Divider />
      <Columns>
        <div>
          <span>Интервал:</span>
          <Row>
            <Small name='paraMore' label='Увеличить интервал' />
            <Small name='paraLess' label='Уменьшить интервал' />
          </Row>
          <SpinField icon='above' label='Интервал над абзацем' />
          <SpinField icon='below' label='Интервал под абзацем' />
          <Row>
            <Small name='lineSpacing' label='Межстрочный интервал' caret />
          </Row>
        </div>
        <div>
          <span>Отступ:</span>
          <Row>
            <Small name='indentMore' label='Увеличить отступ' />
            <Small name='indentLess' label='Уменьшить отступ' />
            <Small name='hanging' label='Висячий отступ' />
          </Row>
          <SpinField icon='before' label='Отступ слева' />
          <SpinField icon='after' label='Отступ справа' />
          <SpinField icon='firstLine' label='Отступ первой строки' />
        </div>
      </Columns>
    </Section>
  </Panel>
);

/* ---------- status bar ---------- */

const StatusBar = styled.footer`
  height: 24px;
  flex: none;
  display: flex;
  align-items: center;
  border-top: 2px solid #55585b;
  white-space: nowrap;
`;

const StatusCell = styled.span`
  width: ${({ $width }) => $width}px;
  flex: none;
  display: flex;
  align-items: center;
  justify-content: ${({ $center }) => ($center ? 'center' : 'flex-start')};
  padding-left: ${({ $center }) => ($center ? 0 : 9)}px;
`;

const Zoom = styled.div`
  display: flex;
  align-items: center;
  gap: 4px;
  margin: 0 12px 0 18px;

  button {
    width: 8px;
    font-size: 14px;
  }

  input {
    width: 94px;
    height: 12px;
    margin: 0;
    appearance: none;
    background:
      linear-gradient(var(--text), var(--text)) 16px 50% / 2px 6px no-repeat,
      linear-gradient(#c5c7c9, #c5c7c9) 0 50% / 100% 2px no-repeat;
  }

  input::-webkit-slider-thumb {
    width: 8px;
    height: 8px;
    appearance: none;
    border-radius: 50%;
    background: var(--text);
  }
`;

const ViewButtons = styled.div`
  display: flex;
  gap: 4px;
`;

const App = () => (
  <Shell>
    <GlobalStyle />
    <MenuBar>
      {menus.map((name) => (
        <button key={name}>{name}</button>
      ))}
      <CloseWindow aria-label='Закрыть документ'>
        <Icon name='close' size={10} />
      </CloseWindow>
    </MenuBar>
    <Toolbar>
      <Tools items={standardTools} />
    </Toolbar>
    <Toolbar $format>
      <Select label='Стиль абзаца' value='Базовый' $width={150} $gap={2} />
      <Tools items={styleTools} />
      <Separator $wide />
      <Select label='Гарнитура' value='Liberation Serif' $width={150} $gap={10} />
      <Select label='Кегль' value='12 пт' $width={72} $gap={1} />
      <Separator $wide />
      <Tools items={formatTools} />
    </Toolbar>
    <Workspace>
      <Canvas>
        <RulerRow>
          <TabKind aria-label='Тип табуляции' />
          <Ruler />
        </RulerRow>
        <Page>
          <Margins />
          <Line>Эколицемерие</Line>
          <Line $bold>История</Line>
          <Line>
            Во времена Викторианской эпохи многие европейские и другие страны начали развивать
            свою промышленность
            <TextCursor />
          </Line>
          <Line>Автор: Астольф Сергеевич</Line>
        </Page>
      </Canvas>
      <ScrollTrack />
      <Splitter>
        <SplitterGrip aria-label='Скрыть боковую панель' />
      </Splitter>
      <Sidebar>
        <PropertiesPanel />
        <TabBar>
          <DeckMenu aria-label='Параметры боковой панели'>
            <Icon name='dots' size={14} />
          </DeckMenu>
          <DeckButton $active aria-label='Свойства'>
            <Icon name='properties' />
          </DeckButton>
          <DeckButton aria-label='Страница'>
            <Icon name='page' />
          </DeckButton>
          <DeckButton aria-label='Стили'>
            <Icon name='styles' />
          </DeckButton>
          <DeckButton aria-label='Галерея'>
            <Icon name='gallery' />
          </DeckButton>
          <DeckButton aria-label='Навигатор'>
            <Icon name='navigator' />
          </DeckButton>
        </TabBar>
      </Sidebar>
    </Workspace>
    <StatusBar>
      <StatusCell $width={180}>Страница 1 из 1</StatusCell>
      <StatusCell $width={268}>18 слов, 145 символов</StatusCell>
      <StatusCell $width={136}>Базовый</StatusCell>
      <StatusCell $width={192} $center>
        Английский (США)
      </StatusCell>
      <Push />
      <StatusCell $width={28} $center>
        <Icon name='insertMode' size={14} />
      </StatusCell>
      <StatusCell $width={161}>
        <Icon name='modified' size={10} />
      </StatusCell>
      <ViewButtons>
        <button aria-label='Одна страница'>
          <Icon name='viewSingle' size={12} />
        </button>
        <button aria-label='Несколько страниц'>
          <Icon name='viewMulti' size={12} width={18} box={24} />
        </button>
        <button aria-label='Разворот'>
          <Icon name='viewBook' size={12} width={16} box={20} />
        </button>
      </ViewButtons>
      <Zoom>
        <button aria-label='Уменьшить масштаб'>−</button>
        <input type='range' aria-label='Масштаб' defaultValue='50' />
        <button aria-label='Увеличить масштаб'>+</button>
      </Zoom>
      <StatusCell $width={46} $center>
        100 %
      </StatusCell>
    </StatusBar>
  </Shell>
);

export default App;
